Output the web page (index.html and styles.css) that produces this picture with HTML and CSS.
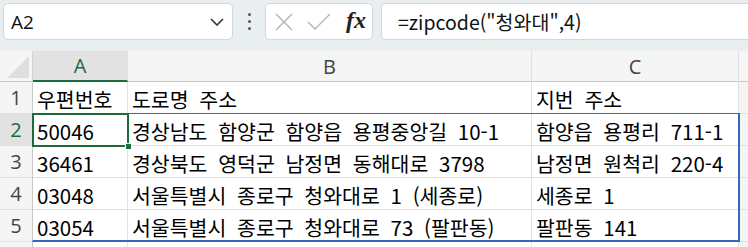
FILE: index.html
```html
<!DOCTYPE html>
<html lang="ko">
<head>
  <meta charset="UTF-8">
  <title>zipcode</title>
  <link rel="stylesheet" href="styles.css">
</head>
<body>
  <div class="toolbar">
    <div class="name-box">
      <span>A2</span>
      <svg class="chevron" width="14" height="8" viewBox="0 0 14 8"><path d="M1 1 L7 7 L13 1" fill="none" stroke="#333" stroke-width="1.6"/></svg>
    </div>
    <div class="dots"><i></i><i></i><i></i></div>
    <div class="fx-buttons">
      <svg width="18" height="18" viewBox="0 0 18 18"><path d="M1 1 L17 17 M17 1 L1 17" stroke="#b4b4b4" stroke-width="1.4"/></svg>
      <svg width="24" height="18" viewBox="0 0 24 18"><path d="M1 9 L8 16 L23 1" fill="none" stroke="#b4b4b4" stroke-width="1.4"/></svg>
      <span class="fx">fx</span>
    </div>
    <div class="formula">=zipcode("청와대",4)</div>
  </div>

  <div class="sheet">
    <div class="grid">
      <div class="corner"></div>
      <div class="col-head active">A</div>
      <div class="col-head">B</div>
      <div class="col-head">C</div>
      <div class="col-head rest"></div>

      <div class="row-head">1</div>
      <div class="cell">우편번호</div>
      <div class="cell">도로명 주소</div>
      <div class="cell">지번 주소</div>
      <div class="cell rest"></div>

      <div class="row-head active">2</div>
      <div class="cell">50046</div>
      <div class="cell">경상남도 함양군 함양읍 용평중앙길 10-1</div>
      <div class="cell">함양읍 용평리 711-1</div>
      <div class="cell rest"></div>

      <div class="row-head">3</div>
      <div class="cell">36461</div>
      <div class="cell">경상북도 영덕군 남정면 동해대로 3798</div>
      <div class="cell">남정면 원척리 220-4</div>
      <div class="cell rest"></div>

      <div class="row-head">4</div>
      <div class="cell">03048</div>
      <div class="cell">서울특별시 종로구 청와대로 1 (세종로)</div>
      <div class="cell">세종로 1</div>
      <div class="cell rest"></div>

      <div class="row-head">5</div>
      <div class="cell">03054</div>
      <div class="cell">서울특별시 종로구 청와대로 73 (팔판동)</div>
      <div class="cell">팔판동 141</div>
      <div class="cell rest"></div>

      <div class="row-head"></div>
      <div class="cell"></div>
      <div class="cell"></div>
      <div class="cell"></div>
      <div class="cell rest"></div>
    </div>
    <div class="spill"></div>
    <div class="selection"><span class="handle"></span></div>
  </div>
</body>
</html>
```

FILE: styles.css
```css
* {
  box-sizing: border-box;
}
body {
  margin: 0;
  width: 748px;
  height: 247px;
  overflow: hidden;
  background: #fff;
  font-family: "Noto Sans CJK KR", "Noto Sans", sans-serif;
  color: #000;
}

/* formula bar */
.toolbar {
  height: 51px;
  background: #e9eef1;
  display: flex;
  align-items: flex-start;
  padding: 3px 0 0 3px;
}
.name-box {
  width: 230px;
  height: 37px;
  background: #fff;
  border: 1px solid #d4d7da;
  border-radius: 5px;
  display: flex;
  align-items: center;
  justify-content: space-between;
  padding: 0 8px 0 7px;
  font-family: "Open Sans", sans-serif;
  font-size: 19px;
  color: #111;
}
.chevron {
  margin-top: 1px;
}
.dots {
  width: 32px;
  height: 37px;
  display: flex;
  flex-direction: column;
  align-items: center;
  justify-content: center;
  gap: 4px;
}
.dots i {
  width: 3px;
  height: 3px;
  background: #555;
  border-radius: 50%;
}
.fx-buttons {
  width: 108px;
  height: 37px;
  background: #fff;
  border: 1px solid #d4d7da;
  border-radius: 5px;
  display: flex;
  align-items: center;
  padding: 0 0 0 9px;
  gap: 14px;
}
.fx {
  font-family: "Liberation Serif", serif;
  font-style: italic;
  font-weight: bold;
  font-size: 24px;
  color: #222;
  margin-left: 1px;
  margin-top: -3px;
}
.formula {
  flex: 1;
  height: 37px;
  margin-left: 8px;
  background: #fff;
  border: 1px solid #d4d7da;
  border-right: none;
  border-radius: 5px 0 0 5px;
  padding: 0 0 0 16px;
  display: flex;
  align-items: center;
  font-size: 19.5px;
  color: #111;
}

/* sheet */
.sheet {
  position: relative;
}
.grid {
  display: grid;
  grid-template-columns: 33px 95px 404px 207px 9px;
  grid-template-rows: 31px 32px 32px 32px 32px 32px 32px;
}
.corner {
  background: #f5f5f5;
  border-right: 1px solid #d6d6d6;
  border-bottom: 1px solid #c8c8c8;
  position: relative;
}
.corner::after {
  content: '';
  position: absolute;
  right: 3px;
  bottom: 3px;
  border-left: 22px solid transparent;
  border-bottom: 22px solid #dedede;
}
.col-head {
  background: #f5f5f5;
  border-right: 1px solid #e0e0e0;
  border-bottom: 1px solid #c8c8c8;
  display: flex;
  align-items: center;
  justify-content: center;
  font-family: "Open Sans", sans-serif;
  font-size: 20px;
  color: #444;
}
.col-head.active {
  background: #e2e2e2;
  color: #1c6c3e;
  border-bottom: 2px solid #1c6c3e;
}
.row-head {
  background: #f5f5f5;
  border-right: 1px solid #c8c8c8;
  border-bottom: 1px solid #e0e0e0;
  display: flex;
  align-items: center;
  justify-content: center;
  font-family: "Open Sans", sans-serif;
  font-size: 20px;
  color: #444;
}
.row-head.active {
  background: #e2e2e2;
  color: #1c6c3e;
}
.cell {
  border-right: 1px solid #e1e1e1;
  border-bottom: 1px solid #e1e1e1;
  display: flex;
  align-items: center;
  padding: 2px 0 0 4px;
  font-size: 20.5px;
  word-spacing: 5px;
  white-space: nowrap;
  overflow: hidden;
}
.cell.rest {
  background: #f4f4f4;
  border-right: none;
}
.col-head.rest {
  border-right: none;
}

/* range outlines */
.spill {
  position: absolute;
  left: 32px;
  top: 62px;
  width: 708px;
  height: 129px;
  border: 2px solid #3468c0;
  border-left-color: #c8c8c8;
  border-left-width: 1px;
  border-top-width: 1px;
  pointer-events: none;
}
.selection {
  position: absolute;
  left: 32px;
  top: 62px;
  width: 97px;
  height: 34px;
  border: 2px solid #1c6c3e;
}
.handle {
  position: absolute;
  right: -5px;
  bottom: -5px;
  width: 7px;
  height: 7px;
  background: #1c6c3e;
  border: 1px solid #fff;
}
```
